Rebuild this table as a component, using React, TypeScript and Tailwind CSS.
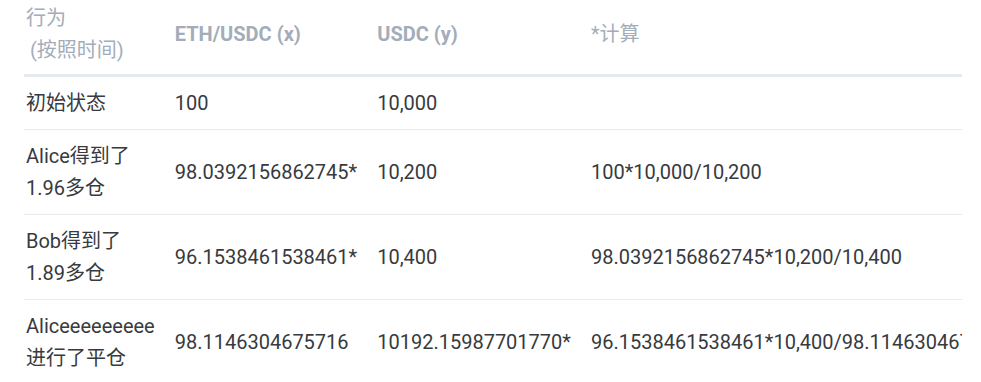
import React from 'react';

type Row = { action: React.ReactNode; x: string; y: string; calc: string };

const ROWS: Row[] = [
  { action: '初始状态', x: '100', y: '10,000', calc: '' },
  { action: <>Alice得到了<br />1.96多仓</>, x: '98.0392156862745*', y: '10,200', calc: '100*10,000/10,200' },
  { action: <>Bob得到了<br />1.89多仓</>, x: '96.1538461538461*', y: '10,400', calc: '98.0392156862745*10,200/10,400' },
  {
    action: <>Aliceeeeeeeee<br />进行了平仓</>,
    x: '98.1146304675716',
    y: '10192.15987701770*',
    calc: '96.1538461538461*10,400/98.1146304675716',
  },
];

export default function App() {
  return (
    <div
      className="w-[981px] h-[382px] bg-white overflow-hidden pl-[24px]"
      style={{ fontFamily: 'Roboto, "Noto Sans CJK SC", sans-serif' }}
    >
      <div className="w-[938px] overflow-hidden">
        <table className="border-collapse text-[20px] leading-[32px] text-left whitespace-nowrap">
          <colgroup>
            <col className="w-[151px]" />
            <col className="w-[203px]" />
            <col className="w-[213px]" />
            <col className="w-[600px]" />
          </colgroup>
          <thead>
            <tr className="border-b-[3px] border-[#e5e9f0] text-[#a3adb9] font-semibold">
              <th className="pt-[2px] pb-[8px] pl-[2px] pr-5 font-normal align-middle">
                行为<br />
                <span className="ml-[4px]">(按照时间)</span>
              </th>
              <th className="pt-[2px] pb-[8px] pr-5 align-middle">ETH/USDC (x)</th>
              <th className="pt-[2px] pb-[8px] pr-5 align-middle">USDC (y)</th>
              <th className="pt-[2px] pb-[8px] pr-5 font-normal align-middle">*计算</th>
            </tr>
          </thead>
          <tbody className="text-[#373a3e]">
            {ROWS.map((r, i) => (
              <tr key={i} className="border-b border-[#e8ecf1]">
                <td className="py-[10px] pl-[2px] pr-5 align-middle">{r.action}</td>
                <td className="py-[10px] pr-5 align-middle">{r.x}</td>
                <td className="py-[10px] pr-5 align-middle">{r.y}</td>
                <td className="py-[10px] pr-5 align-middle">{r.calc}</td>
              </tr>
            ))}
          </tbody>
        </table>
      </div>
    </div>
  );
}
